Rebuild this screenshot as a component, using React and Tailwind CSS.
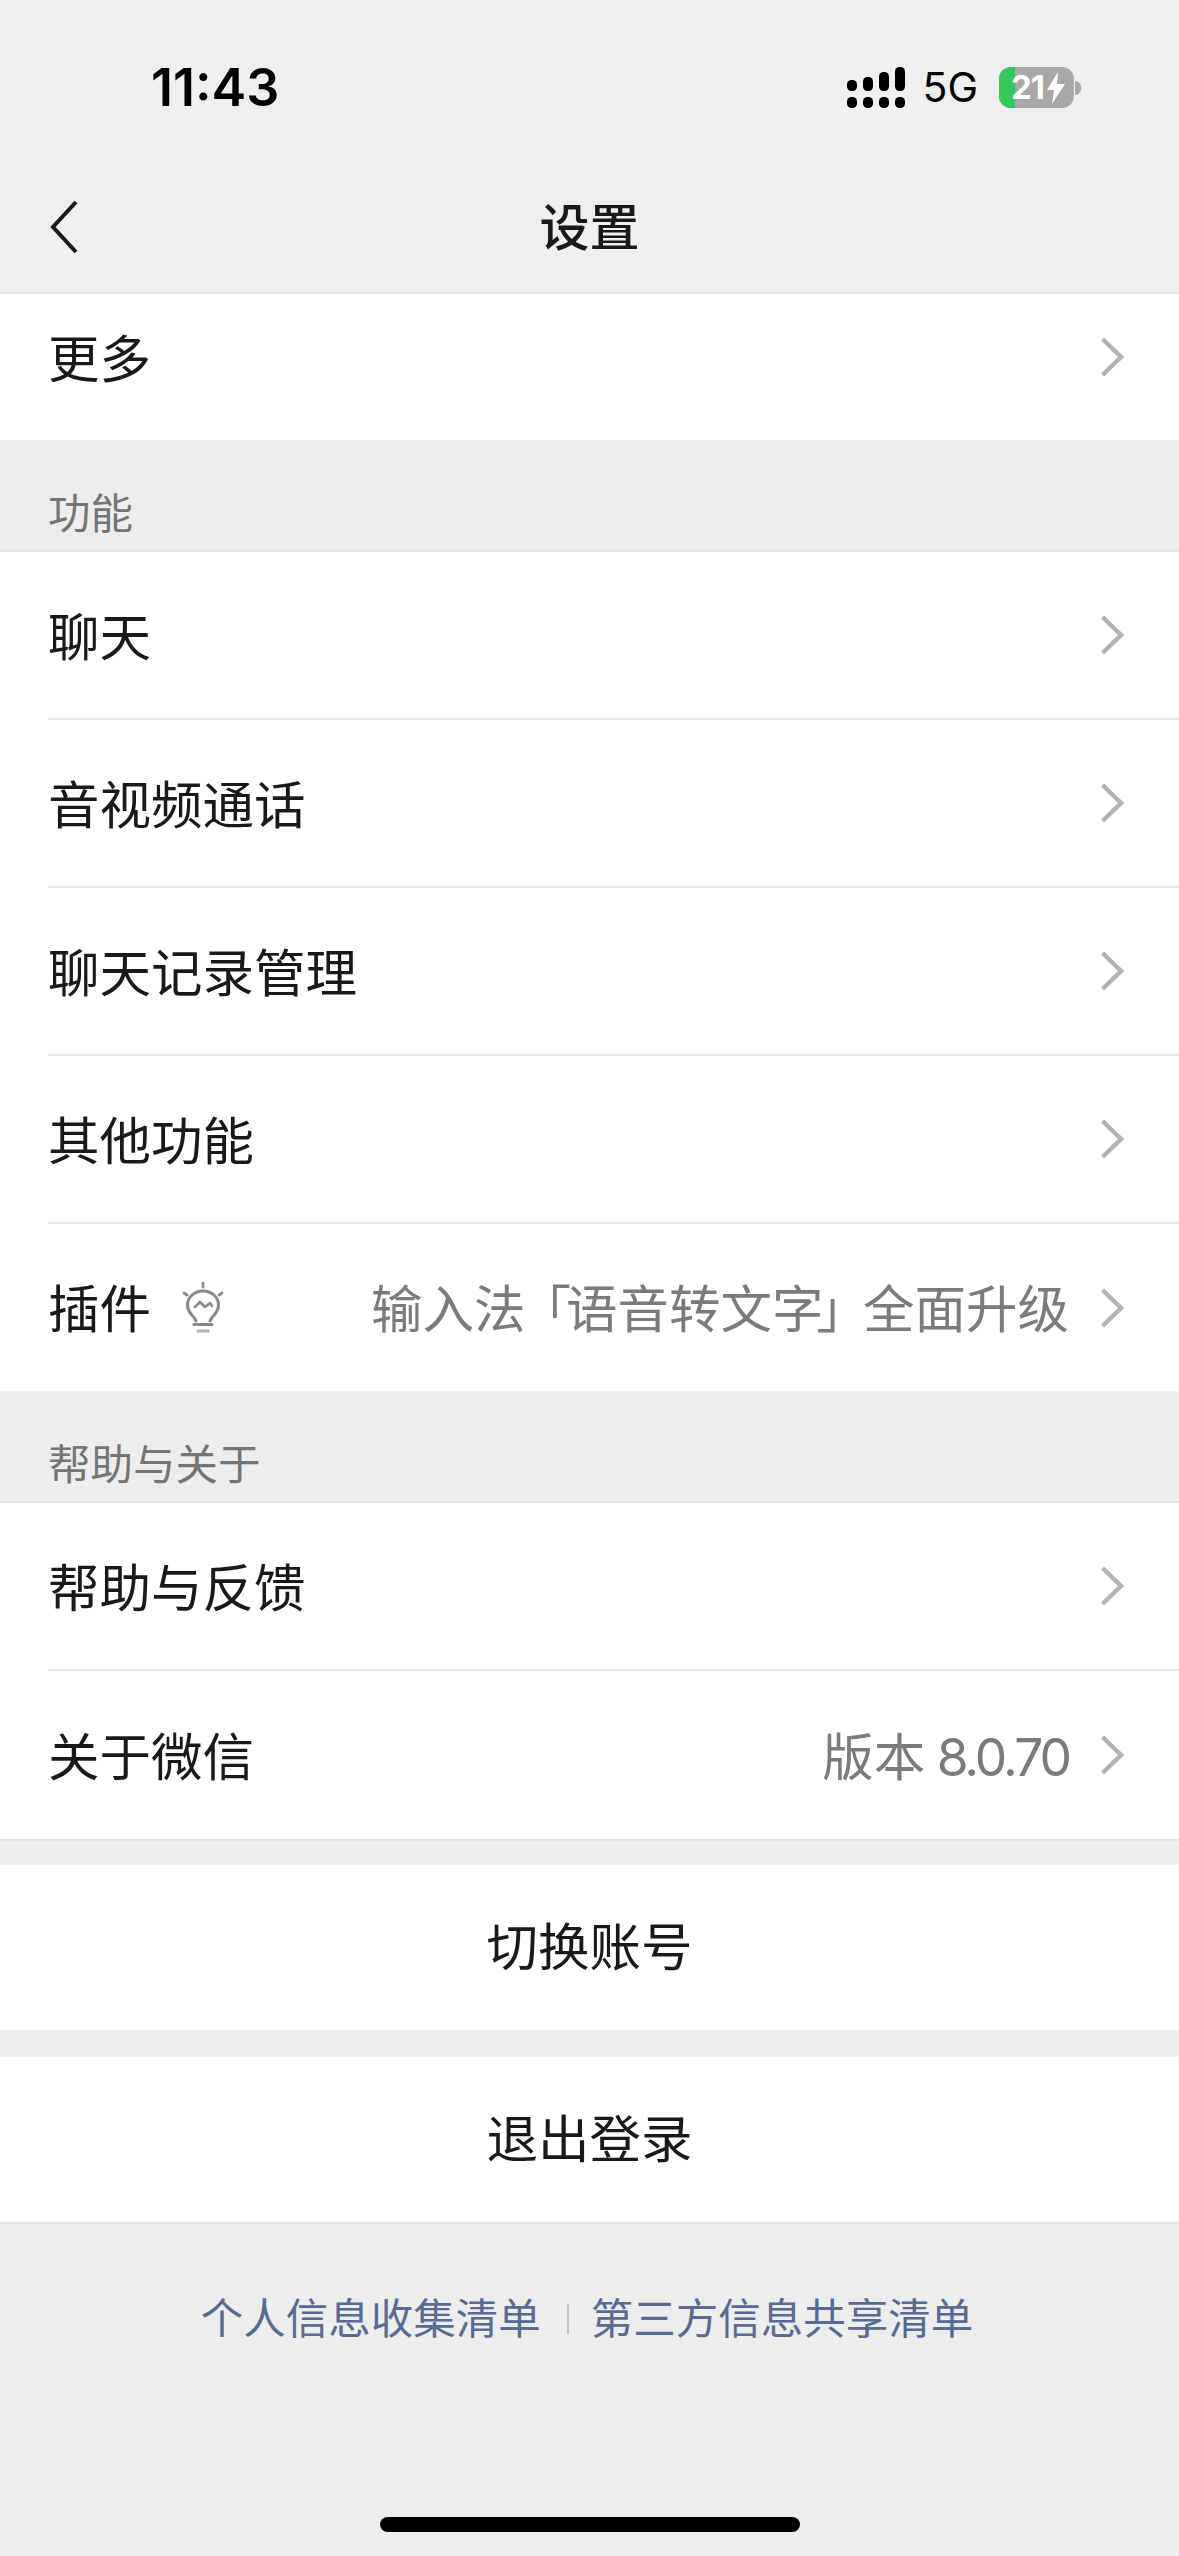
import React from 'react';

const Chevron = () => (
    <svg width="26" height="42" viewBox="0 0 26 42" fill="none" className="shrink-0">
        <path d="M3.5 3 L22 21 L3.5 39" stroke="#b4b4b4" strokeWidth="4.5" />
    </svg>
);

const Bulb = () => (
    <svg width="44" height="52" viewBox="0 0 44 52" fill="none" stroke="#8a8a8a" className="shrink-0">
        <path d="M22 1v4M3 11l3 2M41 11l-3 2" strokeWidth="2.8" strokeLinecap="round" />
        <path d="M15 39c-1-3-3-5-5-7-2-2.500-3.500-5.500-3.500-9C6.500 15 13.500 9 22 9s15.500 6 15.500 14c0 3.500-1.500 6.500-3.500 9-2 2-4 4-5 7" strokeWidth="3" strokeLinecap="round" />
        <path d="M14 25l5-5 5 5 5-4 2 3" strokeWidth="2.6" strokeLinecap="round" strokeLinejoin="round" />
        <path d="M13 42.500h18" strokeWidth="3" strokeLinecap="round" />
        <path d="M17 49h10" strokeWidth="3.200" strokeLinecap="round" stroke="#b0b0b0" />
    </svg>
);

const Signal = () => (
    <svg width="58" height="41" viewBox="0 0 58 41" fill="#000" className="shrink-0">
        <rect x="0" y="13" width="10" height="11" rx="4.500" />
        <rect x="16" y="10" width="10" height="14" rx="4.500" />
        <rect x="32" y="5" width="10" height="19" rx="4.500" />
        <rect x="48" y="0" width="10" height="24" rx="4.500" />
        <rect x="0" y="30" width="10" height="11" rx="4.500" />
        <rect x="16" y="30" width="10" height="11" rx="4.500" />
        <rect x="32" y="30" width="10" height="11" rx="4.500" />
        <rect x="48" y="30" width="10" height="11" rx="4.500" />
    </svg>
);

const Battery = () => (
    <div className="flex items-center shrink-0">
        <div className="relative w-[75px] h-[41px] rounded-[12px] bg-[#a8a8a8] overflow-hidden flex items-center pl-[12px]">
            <div className="absolute left-0 top-0 bottom-0 w-[16px] bg-[#34c759]" />
            <span className="relative font-['Inter',sans-serif] text-[33px] leading-none font-bold text-white tracking-[-1px]">21</span>
            <svg width="18" height="32" viewBox="0 0 18 32" fill="#fff" className="relative ml-[3px]">
                <path d="M11 0 L0 18 H7 L5 32 L18 12 H10 Z" />
            </svg>
        </div>
        <div className="w-[6px] h-[14px] ml-[1px] bg-[#a8a8a8] rounded-r-full" />
    </div>
);

const Row = ({ label, extra, value, last, size = 'h-[168px]' }) => (
    <div className="pl-[48px] bg-white">
        <div className={`${size} flex items-center pr-[54px] ${last ? '' : 'border-b-2 border-[#e9e9e9]'}`}>
            <span className="mt-[5px] text-[51.5px] leading-none text-[#191919] whitespace-nowrap">{label}</span>
            {extra}
            <span className="ml-auto mr-[30px] mt-[5px] text-[51.5px] leading-none text-[#7b7b7b] whitespace-nowrap">{value}</span>
            <Chevron />
        </div>
    </div>
);

const SectionTitle = ({ children }) => (
    <div className="h-[112px] pl-[48px] pb-[11px] flex items-end border-b-2 border-[#e4e4e4] text-[42.5px] leading-[50px] text-[#757575]">
        {children}
    </div>
);

const ActionButton = ({ children }) => (
    <div className="h-[165px] bg-white flex items-center justify-center text-[51.5px] leading-none text-[#191919]">
        {children}
    </div>
);

export default function App() {
    return (
        <div className="w-[1179px] h-[2556px] bg-[#ededed] flex flex-col overflow-hidden font-['Inter','Noto_Sans_CJK_SC',sans-serif]">
            <div className="h-[294px] shrink-0 bg-[#efefef] border-b-2 border-[#e4e4e4] flex flex-col">
                <div className="h-[176px] pt-[62px] pl-[151px] pr-[98px] flex items-start justify-between">
                    <span className="font-['Inter',sans-serif] text-[52px] leading-[52px] font-semibold text-black">11:43</span>
                    <div className="flex items-center h-[41px] mt-[5px]">
                        <Signal />
                        <span className="ml-[17px] mr-[21px] font-['Inter',sans-serif] text-[41px] leading-none text-black">5G</span>
                        <Battery />
                    </div>
                </div>
                <div className="relative flex-1 flex items-center justify-center pb-[12px]">
                    <svg width="30" height="54" viewBox="0 0 30 54" fill="none" className="absolute left-[49px] top-[24px]">
                        <path d="M27 2 L4 27 L27 52" stroke="#191919" strokeWidth="4" />
                    </svg>
                    <span className="text-[50px] leading-none font-medium text-[#191919]">设置</span>
                </div>
            </div>

            <Row label="更多" last size="h-[146px] pb-[20px]" />
            <SectionTitle>功能</SectionTitle>
            <Row label="聊天" />
            <Row label="音视频通话" />
            <Row label="聊天记录管理" />
            <Row label="其他功能" />
            <Row
                label="插件"
                last
                size="h-[167px]"
                extra={<span className="ml-[30px]"><Bulb /></span>}
                value={<>输入法<span className="-ml-[6px] -mr-[5px]">「</span>语音转文字<span className="-ml-[7px] -mr-[5px]">」</span>全面升级</>}
            />
            <SectionTitle>帮助与关于</SectionTitle>
            <Row label="帮助与反馈" />
            <Row label="关于微信" value={<>版本<span className="tracking-[-3px]"> 8.0.70</span></>} last />

            <div className="h-[26px] border-t-2 border-[#e4e4e4]" />
            <ActionButton>切换账号</ActionButton>
            <div className="h-[27px]" />
            <ActionButton>退出登录</ActionButton>

            <div className="flex-1 border-t-2 border-[#e4e4e4] flex flex-col items-center">
                <div className="mt-[70px] pr-[5px] flex items-center text-[42.5px] leading-[50px] text-[#576b95]">
                    <span>个人信息收集清单</span>
                    <div className="w-[2px] h-[30px] ml-[26px] mr-[22px] bg-[#c4c4c4]" />
                    <span>第三方信息共享清单</span>
                </div>
                <div className="mt-auto mb-[24px] w-[420px] h-[15px] rounded-full bg-black" />
            </div>
        </div>
    );
}
